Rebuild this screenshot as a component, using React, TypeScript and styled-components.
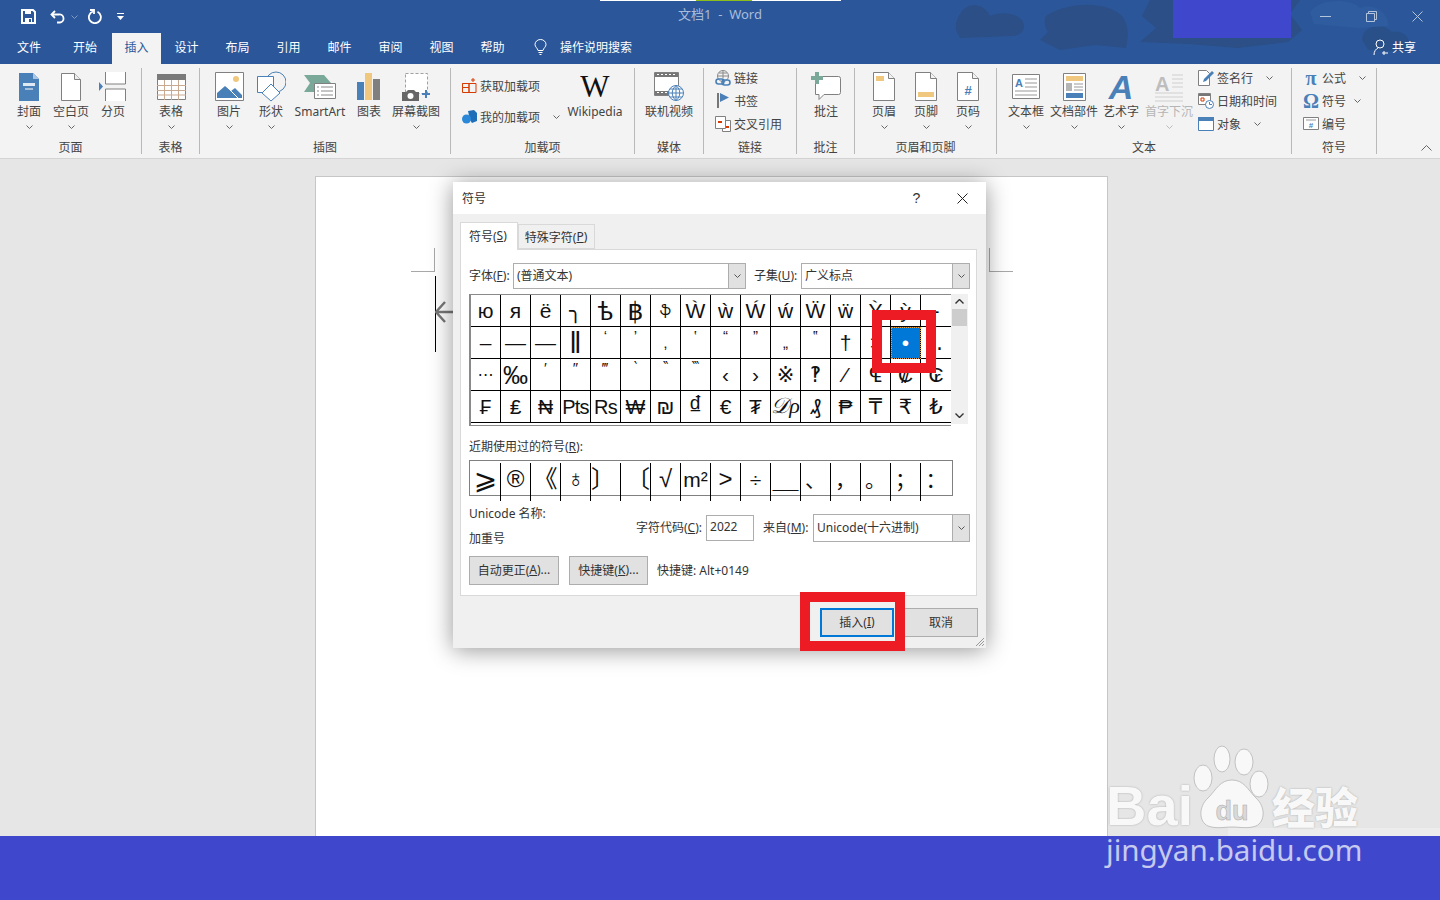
import React from "react";
import styled, { createGlobalStyle } from "styled-components";

const GlobalStyle = createGlobalStyle`
  html, body {
    margin: 0;
    padding: 0;
    width: 1440px;
    height: 900px;
    overflow: hidden;
    font-family: "Noto Sans", "Noto Sans CJK SC", sans-serif;
    font-size: 12px;
    color: #333;
  }
  * { box-sizing: border-box; }
`;

const BLUE = "#4a80b8";
const GRAY = "#808080";
const TAN = "#f0c77e";

/* ---------- ribbon icons ---------- */
const CoverIcon = () => (
  <svg width="24" height="30" viewBox="0 0 24 30">
    <path d="M2 1h14l6 6v22H2z" fill={BLUE} />
    <path d="M16 1l6 6h-6z" fill="#a9c6e3" />
    <path d="M6 11h12v3H6z" fill="#dfe9f3" />
    <path d="M8 17h8" stroke="#fff" />
  </svg>
);
const BlankIcon = () => (
  <svg width="24" height="30" viewBox="0 0 24 30">
    <path d="M2.5 1.5h13l6 6v21h-19z" fill="#fff" stroke={GRAY} />
    <path d="M15.5 1.5v6h6" fill="#eee" stroke={GRAY} />
  </svg>
);
const BreakIcon = () => (
  <svg width="28" height="30" viewBox="0 0 28 30">
    <path d="M6.5 0v12h20V0M6.5 29V17h20v12" fill="#fff" stroke={GRAY} />
    <path d="M0 10l4 4.500-4 4.500z" fill={BLUE} />
  </svg>
);
const TableIcon = () => (
  <svg width="29" height="26" viewBox="0 0 29 26">
    <path d="M.5 .5h28v25H.5z" fill="#fff" stroke={GRAY} />
    <path d="M0 0h29v6H0z" fill="#7a7a7a" />
    <path d="M0 11.500h29M0 16.500h29M0 21h29M7.500 6v20M14.500 6v20M21.500 6v20" stroke="#c9a98f" />
  </svg>
);
const PictureIcon = () => (
  <svg width="29" height="29" viewBox="0 0 29 29">
    <path d="M.5 .5h28v28H.5z" fill="#fff" stroke={GRAY} />
    <circle cx="21" cy="7" r="3" fill={TAN} />
    <path d="M2 26v-5l8-7 6 5 4-3 7 7v3z" fill={BLUE} />
    <path d="M12 15l11 11" stroke="#fff" />
  </svg>
);
const ShapesIcon = () => (
  <svg width="30" height="31" viewBox="0 0 30 31">
    <circle cx="20" cy="11" r="10" fill="none" stroke={BLUE} />
    <path d="M1.500 5.500h16v16h-16z" fill="#fff" stroke={BLUE} />
    <path d="M15 13l9 9-9 8-9-8z" fill="#fff" stroke={BLUE} />
  </svg>
);
const SmartArtIcon = () => (
  <svg width="32" height="26" viewBox="0 0 32 26">
    <path d="M0 1h20l7 8-7 9H0l6-9z" fill="#7aa999" />
    <path d="M10.500 9.500h21v15h-21z" fill="#fff" stroke={GRAY} />
    <path d="M13 13h2m2 0h12M13 17h2m2 0h12M13 21h2m2 0h12" stroke="#8a8a8a" />
  </svg>
);
const ChartIcon = () => (
  <svg width="24" height="27" viewBox="0 0 24 27">
    <path d="M0 9h7v18H0z" fill={BLUE} />
    <path d="M8 0h7v27H8z" fill={TAN} />
    <path d="M16 6h7v21h-7z" fill="#7f7f7f" />
  </svg>
);
const ScreenshotIcon = () => (
  <svg width="28" height="28" viewBox="0 0 28 28">
    <path d="M3.500 .5h22v20h-22z" fill="#fff" stroke="#a0a0a0" strokeDasharray="3 2" />
    <path d="M0 19h4l2-2h6l2 2h3v9H0z" fill="#666" />
    <circle cx="8.500" cy="23" r="3" fill="#fff" />
    <path d="M24 17v8M20 21h8" stroke={BLUE} strokeWidth="2" />
  </svg>
);
const StoreIcon = () => (
  <svg width="15" height="15" viewBox="0 0 15 15">
    <path d="M.5 5.500h6.500v4h-6.500zM7 5.500h7v9H7zM.5 9.500H7v5H.5zM.5 5.500V9" fill="none" stroke="#d83b01" />
    <path d="M11 0v4M9 2h4" stroke="#d83b01" />
  </svg>
);
const AddinIcon = () => (
  <svg width="15" height="14" viewBox="0 0 15 14">
    <path d="M6 1l6-1 3 3v8l-5 2-2-3z" fill="#1f6fb8" />
    <circle cx="4.500" cy="9" r="4.500" fill="#2b88d8" />
  </svg>
);
const VideoIcon = () => (
  <svg width="30" height="29" viewBox="0 0 30 29">
    <path d="M.5 .5h24v23H.5z" fill="#fff" stroke={GRAY} />
    <path d="M1 1h23v4H1zM1 19h23v4H1z" fill="#777" />
    <path d="M3 2.500h18M3 20.500h18" stroke="#fff" strokeDasharray="2 2" />
    <circle cx="22" cy="21" r="7.500" fill="#fff" stroke={BLUE} />
    <path d="M14.500 21h15M22 13.500v15M16 17h12M16 25h12M22 13.500c-5 4-5 11 0 15M22 13.500c5 4 5 11 0 15" fill="none" stroke={BLUE} />
  </svg>
);
const LinkIcon = () => (
  <svg width="16" height="16" viewBox="0 0 16 16">
    <circle cx="8" cy="6" r="5.500" fill="none" stroke="#888" />
    <path d="M2.500 6h11M8 .5v8M4 3h8" stroke="#888" />
    <rect x="1" y="9" width="8" height="5" rx="2.500" fill="none" stroke={BLUE} strokeWidth="1.600" />
    <rect x="7" y="10" width="8" height="5" rx="2.500" fill="none" stroke={BLUE} strokeWidth="1.600" />
  </svg>
);
const BookmarkIcon = () => (
  <svg width="13" height="15" viewBox="0 0 13 15">
    <path d="M1 0v15" stroke="#777" strokeWidth="2" />
    <path d="M3 0l9 4.500-9 4.500z" fill={BLUE} />
  </svg>
);
const CrossRefIcon = () => (
  <svg width="16" height="16" viewBox="0 0 16 16">
    <path d="M.5 .5h10v12H.5zM10.500 4.500h5v11h-8v-3" fill="#fff" stroke={GRAY} />
    <path d="M3 6h4M11 11h3" stroke="#d83b01" strokeWidth="2" />
  </svg>
);
const CommentIcon = () => (
  <svg width="30" height="29" viewBox="0 0 30 29">
    <path d="M4.500 4.500h23a2 2 0 0 1 2 2v14a2 2 0 0 1-2 2H13l-5 5v-5H4.500z" fill="#fff" stroke={GRAY} />
    <path d="M4 0h4v4h4v4H8v4H4V8H0V4h4z" fill="#7aa999" />
  </svg>
);
const PageIcon = ({ kind }: { kind: "head" | "foot" | "num" }) => (
  <svg width="22" height="29" viewBox="0 0 22 29">
    <path d="M.5 .5h15l6 6v22H.5z" fill="#fff" stroke={GRAY} />
    <path d="M15.500 .5v6h6" fill="#f3f3f3" stroke={GRAY} />
    {kind === "head" && <path d="M3 4h8v5H3z" fill={TAN} />}
    {kind === "foot" && <path d="M3 20h16v5H3z" fill={TAN} />}
    {kind === "num" && (
      <text x="11" y="23" fontSize="13" fontWeight="700" textAnchor="middle" fill={BLUE} fontFamily="Liberation Sans">
        #
      </text>
    )}
  </svg>
);
const TextBoxIcon = () => (
  <svg width="28" height="25" viewBox="0 0 28 25">
    <path d="M.5 .5h27v24H.5z" fill="#fff" stroke={GRAY} />
    <text x="3" y="13" fontSize="11" fontWeight="700" fill={BLUE} fontFamily="Liberation Sans">
      A
    </text>
    <path d="M13 5h12M13 9h12M13 13h12M3 17h22M3 21h22" stroke="#999" />
  </svg>
);
const PartsIcon = () => (
  <svg width="23" height="28" viewBox="0 0 23 28">
    <path d="M.5 .5h22v27H.5z" fill="#fff" stroke={GRAY} />
    <path d="M3 3h17v5H3z" fill={TAN} />
    <path d="M3 10h6v8H3z" fill="#b5b5b5" />
    <path d="M11 11h9M11 14h9M11 17h9" stroke="#999" />
    <path d="M3 20h17v5H3z" fill={BLUE} />
  </svg>
);
const DropCapIcon = () => (
  <svg width="30" height="30" viewBox="0 0 30 30">
    <text x="1" y="19" fontSize="20" fontWeight="700" fill="#bdbdbd" fontFamily="Liberation Sans">
      A
    </text>
    <path d="M18 3h11M18 7h11M18 11h11M18 15h11M1 21h28M1 25h28M1 29h28" stroke="#cfcfcf" />
  </svg>
);
const SignIcon = () => (
  <svg width="16" height="16" viewBox="0 0 16 16">
    <path d="M.5 .5h8l3 3v12H.5z" fill="#fff" stroke={GRAY} />
    <path d="M5 12l1-3 8-8 2 2-8 8z" fill={BLUE} />
  </svg>
);
const DateIcon = () => (
  <svg width="16" height="16" viewBox="0 0 16 16">
    <path d="M.5 .5h12v11H.5z" fill="#fff" stroke={GRAY} />
    <path d="M1 1h11v2H1z" fill="#777" />
    <path d="M3 5h3v3H3z" fill="none" stroke="#d83b01" />
    <circle cx="11.500" cy="11.500" r="4" fill="#fff" stroke={BLUE} />
    <path d="M11.500 9v2.500H14" fill="none" stroke={BLUE} />
  </svg>
);
const ObjectIcon = () => (
  <svg width="16" height="14" viewBox="0 0 16 14">
    <path d="M.5 .5h15v13H.5z" fill="#fff" stroke={BLUE} />
    <path d="M0 0h16v4H0z" fill={BLUE} />
  </svg>
);
const NumberIcon = () => (
  <svg width="16" height="13" viewBox="0 0 16 13">
    <path d="M.5 .5h15v12H.5z" fill="#fff" stroke={GRAY} />
    <path d="M3 3h10" stroke="#999" />
    <text x="8" y="11" fontSize="8" fontWeight="700" textAnchor="middle" fill={BLUE} fontFamily="Liberation Sans">
      #
    </text>
  </svg>
);
const Chevron = ({ color = "#666" }: { color?: string }) => (
  <svg width="7" height="4" viewBox="0 0 7 4">
    <path d="M.5 .5l3 3 3-3" fill="none" stroke={color} />
  </svg>
);

/* ---------- page shell ---------- */
const Screen = styled.div`
  position: relative;
  width: 1440px;
  height: 900px;
  overflow: hidden;
  display: flex;
  flex-direction: column;
  background: #e6e6e6;
`;

const Header = styled.header`
  position: relative;
  height: 64px;
  flex: none;
  background: #2b579a;
`;

const HeaderArt = styled.svg`
  position: absolute;
  left: 0;
  top: 0;
`;

const LoadBar = styled.div`
  position: absolute;
  left: 600px;
  top: 0;
  width: 241px;
  height: 1px;
  background: linear-gradient(to right, #fff 40%, #8cbd18 40%, #8cbd18 63%, #fff 63%);
`;

const BlueBlock = styled.div`
  position: absolute;
  left: 1173px;
  top: 0;
  width: 118px;
  height: 38px;
  background: #3f48cc;
`;

const TitleRow = styled.div`
  position: relative;
  height: 33px;
  display: grid;
  grid-template-columns: 1fr auto 1fr;
  align-items: center;
`;

const QuickBar = styled.div`
  display: flex;
  align-items: center;
  padding-left: 21px;
`;

const QuickSlot = styled.div<{ $w: number }>`
  width: ${(p) => p.$w}px;
  display: flex;
  align-items: center;
`;

const DocTitle = styled.div`
  color: #a9bdda;
  font-size: 13px;
  white-space: pre;
  padding-bottom: 6px;
`;

const WinControls = styled.div`
  display: flex;
  justify-content: flex-end;
`;

const WinButton = styled.div`
  width: 46px;
  height: 30px;
  display: flex;
  align-items: center;
  justify-content: center;
`;

const TabRow = styled.nav`
  position: relative;
  height: 31px;
  display: flex;
  align-items: stretch;
  padding-left: 3px;
  color: #fff;
`;

const RibbonTab = styled.div<{ $w: number; $active?: boolean; $shift?: number }>`
  width: ${(p) => p.$w}px;
  padding-left: ${(p) => p.$shift || 0}px;
  padding-bottom: 3px;
  display: flex;
  align-items: center;
  justify-content: center;
  background: ${(p) => (p.$active ? "#f3f3f3" : "transparent")};
  color: ${(p) => (p.$active ? "#2b579a" : "#fff")};
`;

const SearchHint = styled.div`
  display: flex;
  align-items: center;
  gap: 13px;
  margin-left: 16px;
  padding-bottom: 3px;
`;

const ShareButton = styled.div`
  margin-left: auto;
  display: flex;
  align-items: center;
  gap: 3px;
  padding: 0 24px 3px 0;
`;

/* ---------- ribbon ---------- */
const Ribbon = styled.section`
  position: relative;
  height: 95px;
  flex: none;
  display: flex;
  padding-top: 4px;
  background: #f3f3f3;
  border-bottom: 1px solid #d4d4d4;
`;

const Group = styled.div<{ $w: number }>`
  width: ${(p) => p.$w}px;
  height: 86px;
  display: flex;
  flex-direction: column;
  border-right: 1px solid #b9b9b9;
`;

const GroupBody = styled.div<{ $pad?: number }>`
  height: 73px;
  flex: none;
  display: flex;
  padding-left: ${(p) => p.$pad || 0}px;
`;

const GroupLabel = styled.div`
  height: 13px;
  line-height: 14px;
  text-align: center;
  color: #444;
`;

const LargeItem = styled.div<{ $w?: number; $muted?: boolean }>`
  width: ${(p) => p.$w || 42}px;
  flex: none;
  display: flex;
  flex-direction: column;
  align-items: center;
  padding-top: 2px;
  color: ${(p) => (p.$muted ? "#b5b5b5" : "#444")};
  white-space: nowrap;
`;

const IconSlot = styled.div`
  height: 33px;
  display: flex;
  align-items: center;
  justify-content: center;
`;

const ItemText = styled.div`
  height: 17px;
  line-height: 17px;
`;

const ItemCaret = styled.div`
  height: 10px;
  display: flex;
  align-items: center;
  justify-content: center;
  margin-top: 2px;
`;

const SmallColumn = styled.div<{ $w?: number; $top?: number; $gap?: number; $left?: number }>`
  width: ${(p) => (p.$w ? `${p.$w}px` : "auto")};
  flex: none;
  display: flex;
  flex-direction: column;
  gap: ${(p) => p.$gap || 0}px;
  margin-top: ${(p) => p.$top || 0}px;
  margin-left: ${(p) => p.$left || 0}px;
`;

const SmallItem = styled.div`
  height: 23px;
  display: flex;
  align-items: center;
  gap: 3px;
  color: #444;
  white-space: nowrap;
`;

const SmallGlyph = styled.div`
  width: 16px;
  display: flex;
  justify-content: center;
  flex: none;
`;

const CaretAfter = styled.span<{ $gap: number }>`
  margin-left: ${(p) => p.$gap}px;
  display: inline-flex;
`;

const WikiMark = styled.div`
  font-family: "Liberation Serif", serif;
  font-size: 31px;
  line-height: 32px;
  color: #111;
`;

const WordArtMark = styled.div`
  font-family: "Liberation Sans", sans-serif;
  font-style: italic;
  font-weight: 700;
  font-size: 34px;
  line-height: 30px;
  height: 30px;
  color: ${BLUE};
`;

const MathGlyph = styled.span`
  font-family: "Liberation Serif", serif;
  font-weight: 700;
  font-size: 20px;
  line-height: 16px;
  color: ${BLUE};
`;

const CollapseCaret = styled.div`
  position: absolute;
  right: 8px;
  bottom: 3px;
`;

/* ---------- document ---------- */
const DocArea = styled.main`
  position: relative;
  flex: 1;
  min-height: 0;
  padding: 17px 0 0 315px;
  overflow: hidden;
`;

const Page = styled.div`
  position: relative;
  width: 793px;
  height: 700px;
  background: #fff;
  border: 1px solid #c6c6c6;
`;

const CropMark = styled.div<{ $side: "left" | "right" }>`
  position: absolute;
  top: 71px;
  ${(p) => (p.$side === "left" ? "left: 95px;" : "left: 673px;")}
  width: 24px;
  height: 24px;
  border-bottom: 1px solid #a8a8a8;
  ${(p) => (p.$side === "left" ? "border-right" : "border-left")}: 1px solid #a8a8a8;
`;

const Caret = styled.div`
  position: absolute;
  left: 119px;
  top: 99px;
  width: 1px;
  height: 76px;
  background: #000;
`;

const DragArrow = styled.svg`
  position: absolute;
  left: 119px;
  top: 123px;
`;

const StatusStrip = styled.div`
  position: absolute;
  left: 1228px;
  top: 828px;
  width: 212px;
  height: 8px;
  background: #ececec;
`;

const BottomBar = styled.footer`
  height: 64px;
  flex: none;
  background: #3f48cc;
`;

/* ---------- dialog ---------- */
const Dialog = styled.div`
  position: absolute;
  left: 453px;
  top: 182px;
  width: 533px;
  height: 466px;
  background: #f0f0f0;
  box-shadow: 0 2px 22px rgba(0, 0, 0, 0.42);
  display: flex;
  flex-direction: column;
  color: #333;
`;

const DialogTitle = styled.div`
  height: 32px;
  flex: none;
  background: #fff;
  display: flex;
  align-items: center;
  padding-left: 9px;
`;

const TitleText = styled.div`
  flex: 1;
`;

const HelpMark = styled.div`
  width: 45px;
  text-align: center;
  font-size: 14px;
  font-family: "Liberation Sans", sans-serif;
`;

const CloseMark = styled.div`
  width: 48px;
  display: flex;
  justify-content: center;
  margin-left: -1px;
`;

const TabStrip = styled.div`
  display: flex;
  align-items: flex-end;
  height: 27px;
  margin: 8px 0 0 7px;
`;

const DialogTab = styled.div<{ $active?: boolean }>`
  height: ${(p) => (p.$active ? 28 : 25)}px;
  padding: ${(p) => (p.$active ? "0 10px 2px 8px" : "0 7px 0 6px")};
  display: flex;
  align-items: center;
  background: ${(p) => (p.$active ? "#fff" : "#f0f0f0")};
  border: 1px solid #d9d9d9;
  border-bottom: ${(p) => (p.$active ? "none" : "1px solid #d9d9d9")};
  position: relative;
  top: ${(p) => (p.$active ? 1 : 0)}px;
  z-index: ${(p) => (p.$active ? 1 : 0)};
`;

const Panel = styled.div`
  height: 347px;
  margin: 0 9px 0 7px;
  flex: none;
  background: #fff;
  border: 1px solid #d9d9d9;
  padding: 13px 0 0 8px;
`;

const FieldRow = styled.div`
  display: flex;
  align-items: center;
  height: 26px;
`;

const FieldLabel = styled.div<{ $w?: number; $pad?: number; $left?: number }>`
  width: ${(p) => (p.$w ? `${p.$w}px` : "auto")};
  padding-left: ${(p) => p.$pad || 0}px;
  margin-right: ${(p) => p.$left || 0}px;
  padding-bottom: 2px;
  white-space: nowrap;
  flex: none;
`;

const Combo = styled.div<{ $w: number; $h?: number; $left?: number }>`
  width: ${(p) => p.$w}px;
  height: ${(p) => p.$h || 26}px;
  margin-left: ${(p) => p.$left || 0}px;
  flex: none;
  display: flex;
  align-items: stretch;
  background: #fff;
  border: 1px solid #adadad;
  padding-left: 3px;
`;

const ComboValue = styled.div`
  flex: 1;
  display: flex;
  align-items: center;
  padding-bottom: 2px;
  white-space: nowrap;
`;

const ComboArrow = styled.div`
  width: 17px;
  background: #e1e1e1;
  border-left: 1px solid #adadad;
  display: flex;
  align-items: center;
  justify-content: center;
`;

const SymbolArea = styled.div`
  display: flex;
  margin-top: 5px;
`;

const SymbolGrid = styled.div`
  width: 482px;
  display: grid;
  grid-template-columns: repeat(16, 30px);
  grid-auto-rows: 32px;
  border-left: 2px solid #8a8a8a;
  border-top: 1px solid #8a8a8a;
  border-bottom: 1px solid #8a8a8a;
  padding-bottom: 2px;
`;

const SymbolCell = styled.div<{ $selected?: boolean; $last?: boolean; $align?: string; $size?: number }>`
  display: flex;
  align-items: ${(p) => p.$align || "center"};
  justify-content: center;
  font-family: "Liberation Sans", "DejaVu Sans", "Noto Sans CJK SC", sans-serif;
  font-size: ${(p) => p.$size || 21}px;
  line-height: 1.2;
  color: #111;
  white-space: nowrap;
  border-right: ${(p) => (p.$last ? "none" : "1px solid #000")};
  border-bottom: 1px solid #000;
  ${(p) =>
    p.$selected
      ? `background: #0078d7; color: #fff; outline: 1px dotted #e8a040; outline-offset: -1px;`
      : ""}
`;

const ScriptText = styled.span`
  font-family: "Liberation Serif", serif;
  font-style: italic;
  font-size: 22px;
`;

const WideText = styled.span`
  font-family: "Liberation Sans", sans-serif;
  font-size: 20px;
  letter-spacing: -0.800px;
`;

const ScrollBar = styled.div`
  width: 17px;
  height: 130px;
  background: #f0f0f0;
  display: flex;
  flex-direction: column;
  align-items: center;
  padding-top: 5px;
`;

const ScrollThumb = styled.div`
  width: 15px;
  height: 17px;
  margin-top: 5px;
  background: #cdcdcd;
`;

const ScrollGap = styled.div`
  flex: 1;
`;

const ScrollEnd = styled.div`
  height: 11px;
  display: flex;
`;

const RecentLabel = styled.div`
  height: 16px;
  line-height: 16px;
  margin-top: 13px;
`;

const RecentGrid = styled.div`
  width: 484px;
  height: 36px;
  margin-top: 5px;
  display: grid;
  grid-template-columns: repeat(16, 30px);
  border: 1px solid #808080;
  padding-left: 1px;
`;

const RecentCell = styled.div<{ $last?: boolean; $justify?: string; $size?: number }>`
  margin: 2px 0;
  padding-bottom: 4px;
  display: flex;
  align-items: center;
  justify-content: ${(p) => p.$justify || "center"};
  font-family: "Liberation Sans", "DejaVu Sans", "Noto Sans CJK SC", sans-serif;
  font-size: ${(p) => p.$size || 21}px;
  line-height: 1.2;
  color: #111;
  border-right: ${(p) => (p.$last ? "none" : "1px solid #000")};
`;

const InfoRow = styled.div`
  display: flex;
  margin-top: 10px;
  height: 42px;
`;

const InfoNames = styled.div`
  width: 167px;
  flex: none;
  display: flex;
  flex-direction: column;
  gap: 9px;
  line-height: 16px;
`;

const InfoFields = styled.div`
  display: flex;
  align-items: center;
  height: 28px;
  margin-top: 8px;
`;

const CodeInput = styled.div`
  width: 48px;
  height: 26px;
  margin: 0 9px 0 4px;
  border: 1px solid #adadad;
  padding: 2px 0 0 3px;
`;

const ActionRow = styled.div`
  display: flex;
  align-items: center;
  margin-top: 8px;
`;

const PushButton = styled.div<{ $w: number; $default?: boolean }>`
  width: ${(p) => p.$w}px;
  height: 29px;
  padding-bottom: 2px;
  display: flex;
  align-items: center;
  justify-content: center;
  background: #e1e1e1;
  border: ${(p) => (p.$default ? "2px solid #0078d7" : "1px solid #adadad")};
  white-space: nowrap;
`;

const ShortcutNote = styled.div`
  margin-left: 9px;
  padding-bottom: 2px;
`;

const ActionGap = styled.div`
  width: 10px;
`;

const DialogFooter = styled.div`
  display: flex;
  justify-content: flex-end;
  gap: 10px;
  margin-top: 12px;
  padding-right: 8px;
`;

const Grip = styled.svg`
  position: absolute;
  right: 1px;
  bottom: 1px;
`;

/* red marks drawn over the screenshot */
const RedMark = styled.div<{ $x: number; $y: number; $w: number; $h: number }>`
  position: absolute;
  left: ${(p) => p.$x}px;
  top: ${(p) => p.$y}px;
  width: ${(p) => p.$w}px;
  height: ${(p) => p.$h}px;
  border: 10px solid #ed1c24;
`;

/* ---------- watermark ---------- */
const Watermark = styled.div`
  position: absolute;
  left: 1106px;
  top: 744px;
  width: 270px;
`;

const LogoRow = styled.div`
  display: flex;
  align-items: flex-end;
  height: 86px;
`;

const LogoLatin = styled.div`
  font-family: "Liberation Sans", sans-serif;
  font-weight: 700;
  font-size: 56px;
  line-height: 48px;
  color: #f8f8f8;
  text-shadow: 0 0 2px #a5a5a5;
  width: 86px;
`;

const LogoCjk = styled.div`
  font-family: "Noto Sans CJK SC", sans-serif;
  font-weight: 900;
  font-size: 43px;
  line-height: 50px;
  color: #f8f8f8;
  text-shadow: 0 0 2px #a5a5a5;
  white-space: nowrap;
`;

const LogoUrl = styled.div`
  margin-top: 2px;
  font-family: "Noto Sans", sans-serif;
  font-size: 29.600px;
  line-height: 36px;
  color: #c6caee;
  white-space: nowrap;
`;

const row1 = ["ю", "я", "ё", "╮", "ѣ", "฿", "ֆ", "Ẁ", "ẁ", "Ẃ", "ẃ", "Ẅ", "ẅ", "Ỳ", "ỳ", "‐"];
const row2 = ["–", "—", "―", "‖", "‘", "’", "‚", "‛", "“", "”", "„", "‟", "†", "‡", "•", "‥"];
const row3 = ["⋯", "‰", "′", "″", "‴", "‵", "‶", "‷", "‹", "›", "※", "‽", "⁄", "₠", "₡", "₢"];
const row4 = ["₣", "₤", "₦", "Pts", "Rs", "₩", "₪", "₫", "€", "₮", "Dp", "₰", "₱", "₸", "₹", "₺"];
const symbols = [...row1, ...row2, ...row3, ...row4];
const topGlyphs = "‘’‛“”‟′″‴‵‶‷";
const glyphSizes: Record<string, number> = {
  "ֆ": 14, "‘": 15, "’": 15, "‛": 15, "“": 15, "”": 15, "‟": 15, "′": 15, "″": 15, "‴": 15,
  "‵": 15, "‶": 15, "‷": 15, "‚": 15, "„": 15, "ѣ": 25, "฿": 25, "‖": 30, "‰": 25, "₫": 27, "⋯": 16,
};

const recent: { s: string; justify?: string; size?: number }[] = [
  { s: "⩾", size: 28 }, { s: "®", size: 24 }, { s: "《", size: 24 }, { s: "♁", size: 24 },
  { s: "〕", justify: "flex-start", size: 24 }, { s: "〔", justify: "flex-end", size: 24 },
  { s: "√", size: 24 }, { s: "m²", size: 21 }, { s: ">", size: 24 }, { s: "÷" },
  { s: "＿", size: 26 }, { s: "、" }, { s: "，" }, { s: "。" }, { s: "；" }, { s: "：" },
];

const ComboChevron = () => <Chevron color="#555" />;

const Large = ({
  icon, text, w, caret = true, muted,
}: { icon: React.ReactNode; text: string; w?: number; caret?: boolean; muted?: boolean }) => (
  <LargeItem $w={w} $muted={muted}>
    <IconSlot>{icon}</IconSlot>
    <ItemText>{text}</ItemText>
    {caret && <ItemCaret><Chevron color={muted ? "#bbb" : "#666"} /></ItemCaret>}
  </LargeItem>
);

const Small = ({ icon, text, caretGap }: { icon: React.ReactNode; text: string; caretGap?: number }) => (
  <SmallItem>
    <SmallGlyph>{icon}</SmallGlyph>
    {text}
    {caretGap !== undefined && <CaretAfter $gap={caretGap}><Chevron /></CaretAfter>}
  </SmallItem>
);

export default function App() {
  return (
    <Screen>
      <GlobalStyle />
      <Header>
        <HeaderArt width="1440" height="64" viewBox="0 0 1440 64">
          <path d="M960 14c6-12 24-12 30 2 12-6 34-2 34 10 0 8-8 10-12 10l-52 2-2-4c-4-6-2-14 2-20z" fill="#2b4f86" />
          <path d="M1046 16c20-14 60-16 76 0 8 10 6 24 4 32l-30-3-36 5-20-10 8-8c-4-6-4-12-2-16z" fill="#2b4f86" />
          <path d="M1150 0h150l-10 14 12 16-14 12-50 6-50-4-48-2 16-14-14-12z" fill="#2b4f86" />
          <path d="M1362 40c0-16 22-18 30-8 10-2 18 4 18 14l-2 6-40-2z" fill="#2b4f86" opacity="0.8" />
          <path d="M1310 12c10-14 40-14 50-4 14-6 30 6 28 18l-30 2-44-4z" fill="#2e5c9f" />
        </HeaderArt>
        <LoadBar />
        <BlueBlock />
        <TitleRow>
          <QuickBar>
            <QuickSlot $w={29}>
              <svg width="15" height="15" viewBox="0 0 15 15">
                <path d="M1 1h11l2 2v11H1z" fill="none" stroke="#fff" strokeWidth="2" />
                <path d="M4 1h6v4H4zM4 9h7v5H4z" fill="#fff" />
                <path d="M8 10h2v3H8z" fill="#2b579a" />
              </svg>
            </QuickSlot>
            <QuickSlot $w={21}>
              <svg width="15" height="14" viewBox="0 0 15 14">
                <path d="M5 1L1.500 4.500 5 8" fill="none" stroke="#fff" strokeWidth="1.800" />
                <path d="M2 4.500h7a4 4 0 0 1 1 8H7" fill="none" stroke="#fff" strokeWidth="1.800" />
              </svg>
            </QuickSlot>
            <QuickSlot $w={17}><Chevron color="#7f9cc4" /></QuickSlot>
            <QuickSlot $w={29}>
              <svg width="15" height="15" viewBox="0 0 15 15">
                <path d="M9.500 2.800A6 6 0 1 1 5 2.500" fill="none" stroke="#fff" strokeWidth="1.800" />
                <path d="M2 1h4v4" fill="none" stroke="#fff" strokeWidth="1.800" />
              </svg>
            </QuickSlot>
            <QuickSlot $w={10}>
              <svg width="7" height="7" viewBox="0 0 7 7">
                <path d="M0 0h7v1H0zM0 3h7L3.500 7z" fill="#fff" />
              </svg>
            </QuickSlot>
          </QuickBar>
          <DocTitle>文档1  -  Word</DocTitle>
          <WinControls>
            <WinButton>
              <svg width="11" height="1" viewBox="0 0 11 1"><path d="M0 .5h11" stroke="#b4c4dc" /></svg>
            </WinButton>
            <WinButton>
              <svg width="11" height="11" viewBox="0 0 11 11">
                <path d="M.5 2.500h8v8h-8zM2.500 2.500v-2h8v8h-2" fill="none" stroke="#b4c4dc" />
              </svg>
            </WinButton>
            <WinButton>
              <svg width="11" height="11" viewBox="0 0 11 11"><path d="M.5 .5l10 10M10.500 .5l-10 10" stroke="#b4c4dc" /></svg>
            </WinButton>
          </WinControls>
        </TitleRow>
        <TabRow>
          <RibbonTab $w={52}>文件</RibbonTab>
          <RibbonTab $w={57} $shift={3}>开始</RibbonTab>
          <RibbonTab $w={49} $active>插入</RibbonTab>
          <RibbonTab $w={51}>设计</RibbonTab>
          <RibbonTab $w={51}>布局</RibbonTab>
          <RibbonTab $w={51}>引用</RibbonTab>
          <RibbonTab $w={51}>邮件</RibbonTab>
          <RibbonTab $w={51}>审阅</RibbonTab>
          <RibbonTab $w={51}>视图</RibbonTab>
          <RibbonTab $w={51}>帮助</RibbonTab>
          <SearchHint>
            <svg width="13" height="16" viewBox="0 0 13 16">
              <path d="M4 11.500C3.500 9 1 8 1 5.500a5.500 5 0 0 1 11 0C12 8 9.500 9 9 11.500zM4.500 13.500h4M5.500 15.500h2" fill="none" stroke="#fff" />
            </svg>
            操作说明搜索
          </SearchHint>
          <ShareButton>
            <svg width="16" height="16" viewBox="0 0 16 16">
              <circle cx="7" cy="5" r="4" fill="none" stroke="#fff" />
              <path d="M1 16c0-4 2-6 4-7M11 12v4M9 14h6" fill="none" stroke="#fff" />
            </svg>
            共享
          </ShareButton>
        </TabRow>
      </Header>

      <Ribbon>
        <Group $w={142}>
          <GroupBody $pad={8}>
            <Large icon={<CoverIcon />} text="封面" />
            <Large icon={<BlankIcon />} text="空白页" />
            <Large icon={<BreakIcon />} text="分页" caret={false} />
          </GroupBody>
          <GroupLabel>页面</GroupLabel>
        </Group>
        <Group $w={58}>
          <GroupBody $pad={8}>
            <Large icon={<TableIcon />} text="表格" />
          </GroupBody>
          <GroupLabel>表格</GroupLabel>
        </Group>
        <Group $w={251}>
          <GroupBody $pad={8}>
            <Large icon={<PictureIcon />} text="图片" />
            <Large icon={<ShapesIcon />} text="形状" />
            <Large icon={<SmartArtIcon />} text="SmartArt" w={56} caret={false} />
            <Large icon={<ChartIcon />} text="图表" caret={false} />
            <Large icon={<ScreenshotIcon />} text="屏幕截图" w={52} />
          </GroupBody>
          <GroupLabel>插图</GroupLabel>
        </Group>
        <Group $w={184}>
          <GroupBody $pad={10}>
            <SmallColumn $w={103} $top={6} $gap={8}>
              <Small icon={<StoreIcon />} text="获取加载项" />
              <Small icon={<AddinIcon />} text="我的加载项" caretGap={10} />
            </SmallColumn>
            <LargeItem $w={62}>
              <IconSlot><WikiMark>W</WikiMark></IconSlot>
              <ItemText>Wikipedia</ItemText>
            </LargeItem>
          </GroupBody>
          <GroupLabel>加载项</GroupLabel>
        </Group>
        <Group $w={69}>
          <GroupBody $pad={5}>
            <Large icon={<VideoIcon />} text="联机视频" w={58} caret={false} />
          </GroupBody>
          <GroupLabel>媒体</GroupLabel>
        </Group>
        <Group $w={93}>
          <GroupBody $pad={11}>
            <SmallColumn $top={-2}>
              <Small icon={<LinkIcon />} text="链接" />
              <Small icon={<BookmarkIcon />} text="书签" />
              <Small icon={<CrossRefIcon />} text="交叉引用" />
            </SmallColumn>
          </GroupBody>
          <GroupLabel>链接</GroupLabel>
        </Group>
        <Group $w={58}>
          <GroupBody $pad={8}>
            <Large icon={<CommentIcon />} text="批注" caret={false} />
          </GroupBody>
          <GroupLabel>批注</GroupLabel>
        </Group>
        <Group $w={142}>
          <GroupBody $pad={8}>
            <Large icon={<PageIcon kind="head" />} text="页眉" />
            <Large icon={<PageIcon kind="foot" />} text="页脚" />
            <Large icon={<PageIcon kind="num" />} text="页码" />
          </GroupBody>
          <GroupLabel>页眉和页脚</GroupLabel>
        </Group>
        <Group $w={295}>
          <GroupBody $pad={5}>
            <Large icon={<TextBoxIcon />} text="文本框" w={48} />
            <Large icon={<PartsIcon />} text="文档部件" w={48} />
            <Large icon={<WordArtMark>A</WordArtMark>} text="艺术字" w={46} />
            <Large icon={<DropCapIcon />} text="首字下沉" w={50} muted />
            <SmallColumn $top={-2} $left={4}>
              <Small icon={<SignIcon />} text="签名行" caretGap={10} />
              <Small icon={<DateIcon />} text="日期和时间" />
              <Small icon={<ObjectIcon />} text="对象" caretGap={10} />
            </SmallColumn>
          </GroupBody>
          <GroupLabel>文本</GroupLabel>
        </Group>
        <Group $w={85}>
          <GroupBody $pad={11}>
            <SmallColumn $top={-2}>
              <Small icon={<MathGlyph>π</MathGlyph>} text="公式" caretGap={10} />
              <Small icon={<MathGlyph>Ω</MathGlyph>} text="符号" caretGap={5} />
              <Small icon={<NumberIcon />} text="编号" />
            </SmallColumn>
          </GroupBody>
          <GroupLabel>符号</GroupLabel>
        </Group>
        <CollapseCaret>
          <svg width="11" height="6" viewBox="0 0 11 6"><path d="M.5 5.500l5-5 5 5" fill="none" stroke="#666" /></svg>
        </CollapseCaret>
      </Ribbon>

      <DocArea>
        <Page>
          <CropMark $side="left" />
          <CropMark $side="right" />
          <Caret />
          <DragArrow width="20" height="24" viewBox="0 0 20 24">
            <path d="M20 12H2M10 2L1 12l9 10" fill="none" stroke="#777" strokeWidth="2.400" />
          </DragArrow>
        </Page>
      </DocArea>
      <BottomBar />
      <StatusStrip />

      <Dialog>
        <DialogTitle>
          <TitleText>符号</TitleText>
          <HelpMark>?</HelpMark>
          <CloseMark>
            <svg width="11" height="11" viewBox="0 0 11 11"><path d="M.5 .5l10 10M10.500 .5l-10 10" stroke="#222" /></svg>
          </CloseMark>
        </DialogTitle>
        <TabStrip>
          <DialogTab $active>符号(<u>S</u>)</DialogTab>
          <DialogTab>特殊字符(<u>P</u>)</DialogTab>
        </TabStrip>
        <Panel>
          <FieldRow>
            <FieldLabel $w={44}>字体(<u>F</u>):</FieldLabel>
            <Combo $w={233}>
              <ComboValue>(普通文本)</ComboValue>
              <ComboArrow><ComboChevron /></ComboArrow>
            </Combo>
            <FieldLabel $w={47} $pad={8}>子集(<u>U</u>):</FieldLabel>
            <Combo $w={169} $left={8}>
              <ComboValue>广义标点</ComboValue>
              <ComboArrow><ComboChevron /></ComboArrow>
            </Combo>
          </FieldRow>
          <SymbolArea>
            <SymbolGrid>
              {symbols.map((s, i) => (
                <SymbolCell
                  key={i}
                  $selected={s === "•"}
                  $last={i % 16 === 15}
                  $align={topGlyphs.includes(s) ? "flex-start" : undefined}
                  $size={glyphSizes[s]}
                >
                  {s === "Dp" ? <ScriptText>𝒟ρ</ScriptText> : s.length > 1 ? <WideText>{s}</WideText> : s}
                </SymbolCell>
              ))}
            </SymbolGrid>
            <ScrollBar>
              <svg width="9" height="5" viewBox="0 0 9 5"><path d="M.5 4.500l4-4 4 4" fill="none" stroke="#333" strokeWidth="1.400" /></svg>
              <ScrollThumb />
              <ScrollGap />
              <ScrollEnd>
                <svg width="9" height="5" viewBox="0 0 9 5"><path d="M.5 .5l4 4 4-4" fill="none" stroke="#333" strokeWidth="1.400" /></svg>
              </ScrollEnd>
            </ScrollBar>
          </SymbolArea>
          <RecentLabel>近期使用过的符号(<u>R</u>):</RecentLabel>
          <RecentGrid>
            {recent.map((r, i) => (
              <RecentCell key={i} $last={i === 15} $justify={r.justify} $size={r.size}>
                {r.s}
              </RecentCell>
            ))}
          </RecentGrid>
          <InfoRow>
            <InfoNames>
              <div>Unicode 名称:</div>
              <div>加重号</div>
            </InfoNames>
            <InfoFields>
              <FieldLabel>字符代码(<u>C</u>):</FieldLabel>
              <CodeInput>2022</CodeInput>
              <FieldLabel $w={50}>来自(<u>M</u>):</FieldLabel>
              <Combo $w={157} $h={28}>
                <ComboValue>Unicode(十六进制)</ComboValue>
                <ComboArrow><ComboChevron /></ComboArrow>
              </Combo>
            </InfoFields>
          </InfoRow>
          <ActionRow>
            <PushButton $w={90}>自动更正(<u>A</u>)...</PushButton>
            <ActionGap />
            <PushButton $w={79}>快捷键(<u>K</u>)...</PushButton>
            <ShortcutNote>快捷键: Alt+0149</ShortcutNote>
          </ActionRow>
        </Panel>
        <DialogFooter>
          <PushButton $w={74} $default>插入(<u>I</u>)</PushButton>
          <PushButton $w={74}>取消</PushButton>
        </DialogFooter>
        <Grip width="10" height="10" viewBox="0 0 10 10">
          <path d="M9 1L1 9M9 4L4 9M9 7L7 9" stroke="#999" />
        </Grip>
      </Dialog>

      <RedMark $x={872} $y={310} $w={64} $h={63} />
      <RedMark $x={800} $y={592} $w={105} $h={59} />

      <Watermark>
        <LogoRow>
          <LogoLatin>Bai</LogoLatin>
          <svg width="80" height="86" viewBox="0 0 80 86">
            <g fill="#f8f8f8" stroke="#b5b5b5" strokeWidth="0.800">
              <ellipse cx="30" cy="15" rx="8" ry="13" />
              <ellipse cx="52" cy="18" rx="9" ry="13" />
              <ellipse cx="11" cy="34" rx="9" ry="13" />
              <ellipse cx="67" cy="40" rx="9" ry="13" />
              <path d="M40 36c12 0 16 10 24 18 10 9 9 24 0 28-8 3-16 1-24 1s-16 2-24-1c-9-4-10-19 0-28 8-8 12-18 24-18z" />
            </g>
            <text x="40" y="76" textAnchor="middle" fontFamily="Liberation Sans" fontWeight="700" fontSize="27" fill="#d9d9d9" stroke="#aaa" strokeWidth="0.500">
              du
            </text>
          </svg>
          <LogoCjk>经验</LogoCjk>
        </LogoRow>
        <LogoUrl>jingyan.baidu.com</LogoUrl>
      </Watermark>
    </Screen>
  );
}
